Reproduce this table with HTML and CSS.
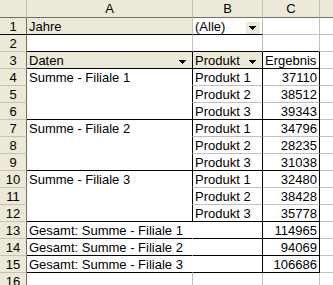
FILE: index.html
```html
<!DOCTYPE html>
<html>
<head>
<meta charset="utf-8">
<link rel="stylesheet" href="styles.css">
</head>
<body>
<div class="sheet">
  <div class="c h corner"></div>
  <div class="c h ch">A</div>
  <div class="c h ch">B</div>
  <div class="c h ch">C</div>
  <div class="c h ch"></div>

  <div class="c h rh r1">1</div>
  <div class="c fld bb">Jahre</div>
  <div class="c ddc bb"><span class="t">(Alle)</span><span class="dd"><svg width="14" height="12" viewBox="0 0 14 12"><path d="M3 4h7v1H3zM4 5h5v1H4zM5 6h3v1H5zM6 7h1v1H6z"/></svg></span></div>
  <div class="c"></div>
  <div class="c"></div>

  <div class="c h rh">2</div>
  <div class="c bb"></div>
  <div class="c bb"></div>
  <div class="c bb"></div>
  <div class="c"></div>

  <div class="c h rh">3</div>
  <div class="c fld ddc bb br"><span class="t">Daten</span><span class="dd"><svg width="14" height="12" viewBox="0 0 14 12"><path d="M3 4h7v1H3zM4 5h5v1H4zM5 6h3v1H5zM6 7h1v1H6z"/></svg></span></div>
  <div class="c fld ddc bb br"><span class="t">Produkt</span><span class="dd"><svg width="14" height="12" viewBox="0 0 14 12"><path d="M3 4h7v1H3zM4 5h5v1H4zM5 6h3v1H5zM6 7h1v1H6z"/></svg></span></div>
  <div class="c bb br">Ergebnis</div>
  <div class="c"></div>

  <div class="c h rh">4</div>
  <div class="c nb br">Summe - Filiale 1</div>
  <div class="c br">Produkt 1</div>
  <div class="c num br">37110</div>
  <div class="c"></div>

  <div class="c h rh">5</div>
  <div class="c nb br"></div>
  <div class="c br">Produkt 2</div>
  <div class="c num br">38512</div>
  <div class="c"></div>

  <div class="c h rh">6</div>
  <div class="c bb br"></div>
  <div class="c bb br">Produkt 3</div>
  <div class="c num bb br">39343</div>
  <div class="c"></div>

  <div class="c h rh">7</div>
  <div class="c nb br">Summe - Filiale 2</div>
  <div class="c br">Produkt 1</div>
  <div class="c num br">34796</div>
  <div class="c"></div>

  <div class="c h rh">8</div>
  <div class="c nb br"></div>
  <div class="c br">Produkt 2</div>
  <div class="c num br">28235</div>
  <div class="c"></div>

  <div class="c h rh">9</div>
  <div class="c bb br"></div>
  <div class="c bb br">Produkt 3</div>
  <div class="c num bb br">31038</div>
  <div class="c"></div>

  <div class="c h rh">10</div>
  <div class="c nb br">Summe - Filiale 3</div>
  <div class="c br">Produkt 1</div>
  <div class="c num br">32480</div>
  <div class="c"></div>

  <div class="c h rh">11</div>
  <div class="c nb br"></div>
  <div class="c br">Produkt 2</div>
  <div class="c num br">38428</div>
  <div class="c"></div>

  <div class="c h rh">12</div>
  <div class="c bb br"></div>
  <div class="c bb br">Produkt 3</div>
  <div class="c num bb br">35778</div>
  <div class="c"></div>

  <div class="c h rh">13</div>
  <div class="c bb nr ov">Gesamt: Summe - Filiale 1</div>
  <div class="c bb br"></div>
  <div class="c num bb br">114965</div>
  <div class="c"></div>

  <div class="c h rh">14</div>
  <div class="c bb nr ov">Gesamt: Summe - Filiale 2</div>
  <div class="c bb br"></div>
  <div class="c num bb br">94069</div>
  <div class="c"></div>

  <div class="c h rh">15</div>
  <div class="c bb nr ov">Gesamt: Summe - Filiale 3</div>
  <div class="c bb br"></div>
  <div class="c num bb br">106686</div>
  <div class="c"></div>

  <div class="c h rh">16</div>
  <div class="c"></div>
  <div class="c"></div>
  <div class="c"></div>
  <div class="c"></div>
</div>
</body>
</html>
```

FILE: styles.css
```css
html, body {
  margin: 0;
  padding: 0;
  background: #ffffff;
  overflow: hidden;
}

.sheet {
  display: grid;
  grid-template-columns: 27px 166px 70px 57px 64px;
  grid-template-rows: 18px;
  grid-auto-rows: 17px;
  width: 333px;
  height: 285px;
  overflow: hidden;
  font-family: "Liberation Sans", Arial, sans-serif;
  font-size: 13px;
  color: #000000;
}

.c {
  box-sizing: border-box;
  border-right: 1px solid #c0c0c0;
  border-bottom: 1px solid #c0c0c0;
  padding: 1px 2px 0 2px;
  line-height: 15px;
  white-space: nowrap;
  overflow: hidden;
  background: #ffffff;
}

.h {
  background: #ece9d8;
  border-right-color: #c5c2b2;
  border-bottom-color: #c5c2b2;
  text-align: center;
  padding: 1px 0 0 0;
}

.ch {
  border-bottom-color: #716f64;
}

.corner {
  border-bottom-color: #716f64;
  border-right-color: #c5c2b2;
}

.rh {
  border-right-color: #716f64;
}

.r1 {
  border-bottom-color: #000000;
}

.fld {
  background: #ece9d8;
}

.ddc {
  display: flex;
  align-items: flex-end;
  padding-top: 0;
}

.ddc .t {
  flex: 1;
  line-height: 15px;
}

.dd {
  display: block;
  width: 14px;
  height: 12px;
  background: #ece9d8;
}

.dd svg {
  display: block;
  fill: #000000;
  shape-rendering: crispEdges;
}

.num {
  text-align: right;
}

.bb {
  border-bottom-color: #000000;
}

.br {
  border-right-color: #000000;
}

.nb {
  border-bottom-color: #ffffff;
}

.nr {
  border-right-color: #ffffff;
}

.ov {
  overflow: visible;
}
```
